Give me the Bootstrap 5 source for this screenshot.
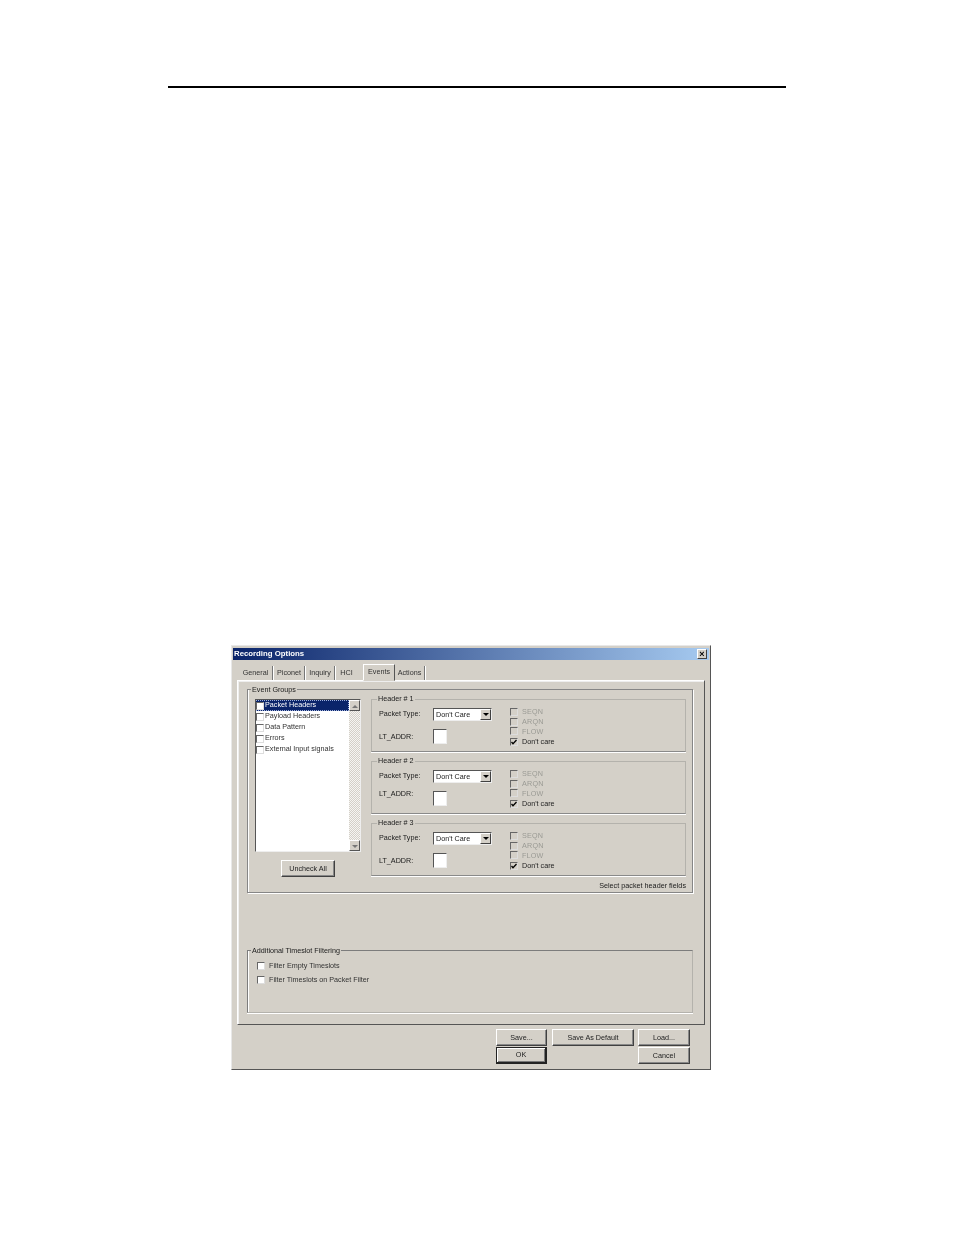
<!DOCTYPE html>
<html lang="en">
<head>
<meta charset="utf-8">
<title>Recording Options</title>
<link href="https://cdn.jsdelivr.net/npm/bootstrap@5.3.0/dist/css/bootstrap.min.css" rel="stylesheet">
<style>
html,body{background:#fff;height:100%}
body{font-family:"Liberation Sans",Arial,sans-serif;color:#000;overflow:hidden}
.pagewrap{padding:86px 168px 0 168px}
.toprule{height:2px;background:#000}
.dlgpos{margin:557px 0 0 63px}
.dlg{width:480px;height:425px;background:#d4d0c8;border:1px solid;border-color:#e8e8e8 #555 #555 #e8e8e8;padding:2px 1px 0 1px;font-size:7.2px;line-height:9px;filter:blur(.4px);color:#1a1a1a}
.tbar{height:12px;background:linear-gradient(90deg,#0a246a,#a6caf0);color:#fff;font-weight:700;font-size:7.8px;line-height:10px;padding-left:1px;padding-bottom:1px}
.xbtn{width:10px;height:10px;margin-right:2px;background:#d4d0c8;border:1px solid;border-color:#fff #404040 #404040 #fff;color:#000;font-size:9px;line-height:8px;font-weight:700;text-align:center}
.tabstrip{padding:4px 0 0 6px;height:20px;align-items:flex-end}
.tabitem{height:14px;line-height:13px;text-align:center;color:#333;border-right:1px solid #777;box-shadow:1px 0 0 #fff}
.tabgen{width:34px}.tabpic{width:31px;margin-left:1px}.tabinq{width:29px;margin-left:1px}.tabhci{width:21px;margin-left:1px;border-right:0;box-shadow:none}
.tabev{width:32px;height:17px;line-height:14px;margin-left:6px;margin-top:-3px;border:1px solid;border-color:#fff #555 transparent #fff;background:#d4d0c8;margin-bottom:-1px;position:relative;z-index:2;box-shadow:none}
.tabac{width:30px}
.tabpane{margin:0 4px 0 4px;height:345px;border:1px solid;border-color:#fff #555 #555 #fff;box-shadow:inset 1px 1px 0 #eee;padding:4px 11px 0 9px}
fieldset.grp{border:1px solid #868686;box-shadow:1px 1px 0 #fff,inset 1px 0 0 #fff;padding:0;margin:0;min-width:0}
legend.lgd{float:none;width:auto;margin:0 0 0 3px;padding:0 1px;font-size:7.2px;line-height:9px}
.evgrp{height:208px}
.hgrp{border-color:#b4b2ac #b4b2ac #8a8a8a #b4b2ac!important;box-shadow:0 1px 0 #fff!important;width:315px;height:57px;margin-bottom:5px!important}
.hgrp legend{margin-left:5px;line-height:8px}
.evbody{padding:1px 7px 0 7px;gap:10px}
.lbcol{width:106px;flex:none;margin-top:4px}
.lbox{height:153px;background:#fff;border:1px solid;border-color:#555 #eee #eee #555;padding:0}
.lbitems{flex:1;color:#333;min-width:0}
.lbrow{height:11px;line-height:9px;white-space:nowrap;gap:1px}
.lbtxt{align-self:flex-start}
.lbsel{background:#0a246a;color:#fff;outline:1px dotted #9fb1dd;outline-offset:-1px}
.sbar{width:11px;flex:none;background:repeating-conic-gradient(#f6f5f2 0 25%,#d4d0c8 0 50%) 0 0/2px 2px}
.sbtn{height:11px;background:#d4d0c8;border:1px solid;border-color:#fff #555 #555 #fff;text-align:center}
.cbx{width:8px;height:8px;flex:none;background:#fff;border:1px solid;border-color:#666 #ddd #ddd #666;display:inline-block;position:relative}
.cbx svg{position:absolute;left:0;top:0;width:6px;height:6px}
.cdim{background:#d4d0c8}
.wbtn{background:#d4d0c8;border:1px solid;border-color:#fff #404040 #404040 #fff;box-shadow:inset -1px -1px 0 #888;text-align:center;padding:0;border-radius:0;color:#222;font-size:7.2px;line-height:14px;height:17px}
.unchk{width:54px;margin:8px 0 0 26px}
.hbody{padding:1px 0 0 7px}
.flds{width:131px;flex:none}
.fldlbl{width:54px;flex:none}
.frow{height:12px;line-height:12px}
.frow2{margin-top:9px;height:14px;line-height:16px}
.ltup{margin-top:-5px}
.cmb{width:59px;flex:none;height:13px;background:#fff;border:1px solid;border-color:#555 #eee #eee #555;padding-left:2px;line-height:11px}
.cmbbtn{width:11px;height:11px;background:#d4d0c8;border:1px solid;border-color:#fff #404040 #404040 #fff;margin-left:auto;flex:none}
.tri{width:0;height:0;border:3px solid transparent;border-top:3px solid #000;border-bottom:0;margin:3px auto 0}
.triup{border-top:0;border-bottom:3px solid #777;margin-top:2px;display:inline-block}
.tridn{border-top-color:#777;display:inline-block}
.ltbox{width:14px;height:15px;flex:none;background:#fff;border:1px solid;border-color:#555 #eee #eee #555}
.chks{padding-top:3px;color:#9a9a94;letter-spacing:.2px}
.chkrow{height:9.8px;line-height:10px;gap:4px}
.chkon{color:#222;letter-spacing:0;margin-top:.6px}
.hint{height:13px;line-height:13px;padding-right:6px;margin-top:-2px;letter-spacing:.02px}
.spacer{height:53px}
.lowgrp{height:67px;border-color:#7c7c7c #b4b2ac #b4b2ac #7c7c7c!important;box-shadow:inset 1px 0 0 #fff,0 1px 0 #fff!important}
.lowbody{padding:4px 0 0 9px;color:#333}
.lowrow{height:14px;line-height:14px;gap:4px}
.foot{display:grid;grid-template-columns:51px 83px 52px;column-gap:4px;row-gap:1px;justify-content:end;padding:4px 19px 0 0}
.foot .wbtn:nth-child(2){margin-left:1px}
.okbtn{border:1px solid #222;box-shadow:inset 1px 1px 0 #fff,inset -1px -1px 0 #777;border-right-width:2px;border-bottom-width:2px;grid-column:1}
.cnbtn{grid-column:3}
</style>
</head>
<body>
<div class="pagewrap"><div class="toprule"></div>
<div class="dlgpos">
<div class="dlg d-flex flex-column">
  <div class="tbar d-flex justify-content-between align-items-center"><span>Recording Options</span><span class="xbtn">×</span></div>
  <ul class="nav tabstrip flex-nowrap">
    <li class="tabitem tabgen">General</li>
    <li class="tabitem tabpic">Piconet</li>
    <li class="tabitem tabinq">Inquiry</li>
    <li class="tabitem tabhci">HCI</li>
    <li class="tabitem tabev">Events</li>
    <li class="tabitem tabac">Actions</li>
  </ul>
  <div class="tabpane">
    <fieldset class="grp evgrp">
      <legend class="lgd">Event Groups</legend>
      <div class="d-flex evbody">
        <div class="lbcol">
          <div class="lbox d-flex">
            <div class="lbitems">
              <div class="lbrow d-flex align-items-center lbsel"><span class="cbx"></span><span class="lbtxt">Packet Headers</span></div>
              <div class="lbrow d-flex align-items-center"><span class="cbx"></span><span class="lbtxt">Payload Headers</span></div>
              <div class="lbrow d-flex align-items-center"><span class="cbx"></span><span class="lbtxt">Data Pattern</span></div>
              <div class="lbrow d-flex align-items-center"><span class="cbx"></span><span class="lbtxt">Errors</span></div>
              <div class="lbrow d-flex align-items-center"><span class="cbx"></span><span class="lbtxt">External Input signals</span></div>
            </div>
            <div class="sbar d-flex flex-column justify-content-between">
              <div class="sbtn"><span class="tri triup"></span></div>
              <div class="sbtn"><span class="tri tridn"></span></div>
            </div>
          </div>
          <button type="button" class="wbtn unchk d-block">Uncheck All</button>
        </div>
        <div>
          <fieldset class="grp hgrp">
            <legend class="lgd">Header # 1</legend>
            <div class="d-flex hbody">
              <div class="flds">
                <div class="d-flex frow mt-1"><span class="fldlbl">Packet Type:</span><div class="cmb d-flex">Don't Care<span class="cmbbtn"><span class="tri d-block"></span></span></div></div>
                <div class="d-flex frow2"><span class="fldlbl">LT_ADDR:</span><span class="ltbox"></span></div>
              </div>
              <div class="chks">
                <div class="chkrow d-flex align-items-center"><span class="cbx cdim"></span>SEQN</div>
                <div class="chkrow d-flex align-items-center"><span class="cbx cdim"></span>ARQN</div>
                <div class="chkrow d-flex align-items-center"><span class="cbx cdim"></span>FLOW</div>
                <div class="chkrow chkon d-flex align-items-center"><span class="cbx cdim"><svg viewBox="0 0 6 6"><path d="M.5 3 2 4.7 5.5 1" fill="none" stroke="#000" stroke-width="1.3"/></svg></span>Don't care</div>
              </div>
            </div>
          </fieldset>
          <fieldset class="grp hgrp">
            <legend class="lgd">Header # 2</legend>
            <div class="d-flex hbody">
              <div class="flds">
                <div class="d-flex frow mt-1"><span class="fldlbl">Packet Type:</span><div class="cmb d-flex">Don't Care<span class="cmbbtn"><span class="tri d-block"></span></span></div></div>
                <div class="d-flex frow2"><span class="fldlbl ltup">LT_ADDR:</span><span class="ltbox"></span></div>
              </div>
              <div class="chks">
                <div class="chkrow d-flex align-items-center"><span class="cbx cdim"></span>SEQN</div>
                <div class="chkrow d-flex align-items-center"><span class="cbx cdim"></span>ARQN</div>
                <div class="chkrow d-flex align-items-center"><span class="cbx cdim"></span>FLOW</div>
                <div class="chkrow chkon d-flex align-items-center"><span class="cbx cdim"><svg viewBox="0 0 6 6"><path d="M.5 3 2 4.7 5.5 1" fill="none" stroke="#000" stroke-width="1.3"/></svg></span>Don't care</div>
              </div>
            </div>
          </fieldset>
          <fieldset class="grp hgrp">
            <legend class="lgd">Header # 3</legend>
            <div class="d-flex hbody">
              <div class="flds">
                <div class="d-flex frow mt-1"><span class="fldlbl">Packet Type:</span><div class="cmb d-flex">Don't Care<span class="cmbbtn"><span class="tri d-block"></span></span></div></div>
                <div class="d-flex frow2"><span class="fldlbl">LT_ADDR:</span><span class="ltbox"></span></div>
              </div>
              <div class="chks">
                <div class="chkrow d-flex align-items-center"><span class="cbx cdim"></span>SEQN</div>
                <div class="chkrow d-flex align-items-center"><span class="cbx cdim"></span>ARQN</div>
                <div class="chkrow d-flex align-items-center"><span class="cbx cdim"></span>FLOW</div>
                <div class="chkrow chkon d-flex align-items-center"><span class="cbx cdim"><svg viewBox="0 0 6 6"><path d="M.5 3 2 4.7 5.5 1" fill="none" stroke="#000" stroke-width="1.3"/></svg></span>Don't care</div>
              </div>
            </div>
          </fieldset>
        </div>
      </div>
      <div class="hint text-end">Select packet header fields</div>
    </fieldset>
    <div class="spacer"></div>
    <fieldset class="grp lowgrp">
      <legend class="lgd">Additional Timeslot Filtering</legend>
      <div class="lowbody">
        <div class="lowrow d-flex align-items-center"><span class="cbx"></span>Filter Empty Timeslots</div>
        <div class="lowrow d-flex align-items-center"><span class="cbx"></span>Filter Timeslots on Packet Filter</div>
      </div>
    </fieldset>
  </div>
  <div class="foot">
    <button type="button" class="wbtn">Save...</button>
    <button type="button" class="wbtn">Save As Default</button>
    <button type="button" class="wbtn">Load...</button>
    <button type="button" class="wbtn okbtn">OK</button>
    <button type="button" class="wbtn cnbtn">Cancel</button>
  </div>
</div>
</div>
</div>
<script src="https://cdn.jsdelivr.net/npm/bootstrap@5.3.0/dist/js/bootstrap.bundle.min.js"></script>
</body>
</html>
